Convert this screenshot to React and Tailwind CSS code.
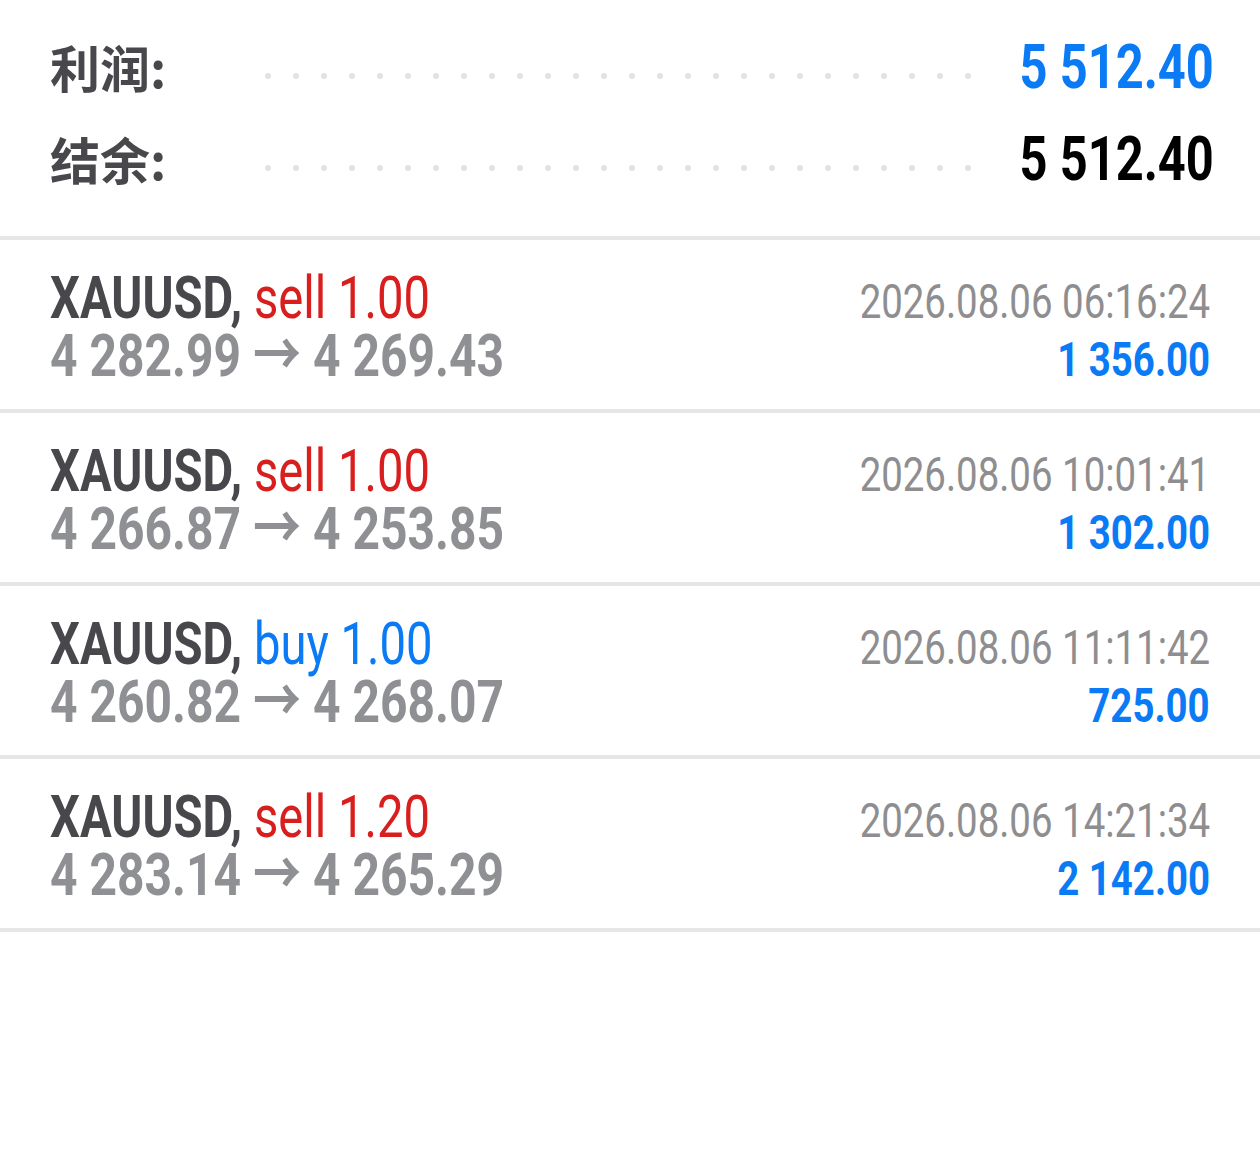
import React from 'react';

const summary = [
  { label: '利润:', value: '5 512.40', color: 'text-[#0a7af5]' },
  { label: '结余:', value: '5 512.40', color: 'text-black' },
];

const trades = [
  { side: 'sell', vol: '1.00', open: '4 282.99', close: '4 269.43', time: '2026.08.06 06:16:24', profit: '1 356.00' },
  { side: 'sell', vol: '1.00', open: '4 266.87', close: '4 253.85', time: '2026.08.06 10:01:41', profit: '1 302.00' },
  { side: 'buy', vol: '1.00', open: '4 260.82', close: '4 268.07', time: '2026.08.06 11:11:42', profit: '725.00' },
  { side: 'sell', vol: '1.20', open: '4 283.14', close: '4 265.29', time: '2026.08.06 14:21:34', profit: '2 142.00' },
];

const Dots = () => (
  <div className="flex w-[706px] gap-[22px] self-start mt-[37px] shrink-0">
    {Array.from({ length: 26 }).map((_, i) => (
      <div key={i} className="w-[6px] h-[6px] rounded-full bg-[#e2e2e2]" />
    ))}
  </div>
);

// Roboto squeezed horizontally to stand in for the condensed face
export default function App() {
  return (
    <div className="min-h-screen bg-white font-['Roboto','Noto_Sans_CJK_SC',sans-serif]">
      {/* account summary */}
      <div className="pt-[36px] pb-[48px] px-[50px] flex flex-col gap-[32px] border-b-4 border-[#e6e6e6]">
        {summary.map((s) => (
          <div key={s.label} className="flex items-baseline h-[60px]">
            <div className="w-[215px] shrink-0 text-[50px] leading-[60px] font-bold text-[#48484c] font-['Noto_Sans_CJK_SC',sans-serif]">
              {s.label}
            </div>
            <Dots />
            <div className={'flex-1 text-right text-[61px] leading-[60px] font-bold ' + s.color}>
              <span className="inline-block whitespace-nowrap origin-right scale-x-80">{s.value}</span>
            </div>
          </div>
        ))}
      </div>

      {/* closed positions */}
      {trades.map((t, i) => (
        <div key={i} className="pt-[28px] pb-[25px] px-[50px] border-b-4 border-[#e6e6e6]">
          <div className="flex justify-between items-baseline h-[58px] leading-[60px]">
            <div className="text-[59px]">
              <span className="inline-block whitespace-nowrap origin-left scale-x-80">
                <span className="font-bold text-[#48484c]">XAUUSD, </span>
                <span className={t.side === 'sell' ? 'text-[#d91e1e]' : 'text-[#0a7af5]'}>
                  {t.side} {t.vol}
                </span>
              </span>
            </div>
            <div className="text-[48px] text-[#8e8e90]">
              <span className="inline-block whitespace-nowrap origin-right scale-x-80">{t.time}</span>
            </div>
          </div>
          <div className="flex justify-between items-baseline h-[58px] leading-[60px]">
            <div className="text-[60px] font-bold text-[#8f9093]">
              <span className="inline-block whitespace-nowrap origin-left scale-x-80">
                {t.open} → {t.close}
              </span>
            </div>
            <div className="text-[48px] font-bold text-[#0a7af5]">
              <span className="inline-block whitespace-nowrap origin-right scale-x-80">{t.profit}</span>
            </div>
          </div>
        </div>
      ))}
    </div>
  );
}
